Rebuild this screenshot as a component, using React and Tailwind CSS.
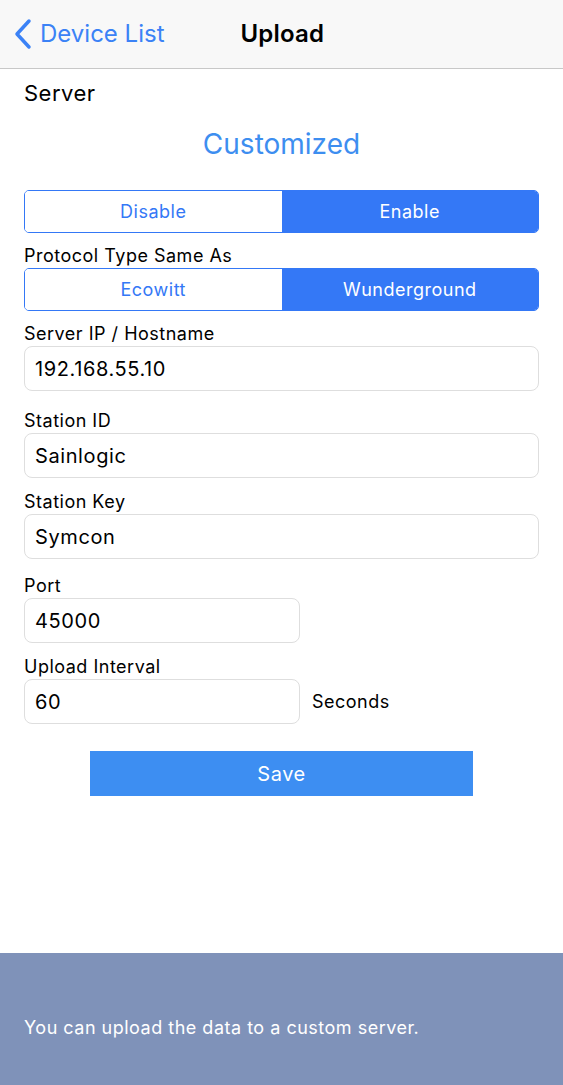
export default function App() {
  const fields = [
    { label: 'Server IP / Hostname', value: '192.168.55.10' },
    { label: 'Station ID', value: 'Sainlogic' },
    { label: 'Station Key', value: 'Symcon' },
  ];

  return (
    <div className="w-[563px] h-[1085px] flex flex-col bg-white text-black" style={{ fontFamily: 'Inter, "Noto Sans", sans-serif' }}>
      {/* Nav bar */}
      <div className="h-[69px] shrink-0 flex items-center bg-[#f8f8f8] border-b border-[#c8c8c8] relative">
        <div className="flex items-center pl-[12px] text-[#3b82f6]">
          <svg width="22" height="32" viewBox="0 0 22 32" fill="none" stroke="currentColor" strokeWidth="3.5" strokeLinecap="round" strokeLinejoin="round">
            <path d="M17 3L5 16l12 13" />
          </svg>
          <span className="ml-[6px] text-[24px]">Device List</span>
        </div>
        <span className="ml-[76px] text-[24px] font-semibold tracking-[0.2px]">Upload</span>
      </div>

      <div className="flex-1 flex flex-col px-[24px] tracking-[0.5px]">
        <div className="text-[22px] mt-[10px] leading-[28px]">Server</div>
        <div className="text-center text-[28px] text-[#3d8ef0] mt-[20px] leading-[34px] tracking-normal">Customized</div>

        <div className="mt-[29px] h-[43px] flex border border-[#3478f6] rounded-[5px] overflow-hidden text-[18px]">
          <div className="flex-1 flex items-center justify-center text-[#3478f6] bg-white">Disable</div>
          <div className="flex-1 flex items-center justify-center text-white bg-[#3478f6]">Enable</div>
        </div>

        <div className="text-[18px] mt-[12px] leading-[22px]">Protocol Type Same As</div>
        <div className="mt-[1px] h-[43px] flex border border-[#3478f6] rounded-[5px] overflow-hidden text-[18px]">
          <div className="flex-1 flex items-center justify-center text-[#3478f6] bg-white">Ecowitt</div>
          <div className="flex-1 flex items-center justify-center text-white bg-[#3478f6]">Wunderground</div>
        </div>

        <div className="text-[18px] mt-[12px] leading-[22px]">{fields[0].label}</div>
        <div className="mt-[1px] h-[45px] flex items-center px-[10px] border border-[#dedede] rounded-[8px] text-[20px] tracking-[0.6px]">{fields[0].value}</div>

        <div className="text-[18px] mt-[19px] leading-[22px]">{fields[1].label}</div>
        <div className="mt-[1px] h-[45px] flex items-center px-[10px] border border-[#dedede] rounded-[8px] text-[20px] tracking-[0.6px]">{fields[1].value}</div>

        <div className="text-[18px] mt-[13px] leading-[22px]">{fields[2].label}</div>
        <div className="mt-[1px] h-[45px] flex items-center px-[10px] border border-[#dedede] rounded-[8px] text-[20px] tracking-[0.6px]">{fields[2].value}</div>

        <div className="text-[18px] mt-[16px] leading-[22px]">Port</div>
        <div className="mt-[1px] w-[276px] h-[45px] flex items-center px-[10px] border border-[#dedede] rounded-[8px] text-[20px] tracking-[0.6px]">45000</div>

        <div className="text-[18px] mt-[13px] leading-[22px]">Upload Interval</div>
        <div className="mt-[1px] flex items-center">
          <div className="w-[276px] h-[45px] flex items-center px-[10px] border border-[#dedede] rounded-[8px] text-[20px] tracking-[0.6px]">60</div>
          <span className="ml-[12px] text-[18px]">Seconds</span>
        </div>

        <div className="mt-[27px] self-center w-[383px] h-[45px] flex items-center justify-center bg-[#3d8ef2] text-white text-[20px]">Save</div>
      </div>

      {/* Footer note */}
      <div className="h-[132px] shrink-0 bg-[#7f92b9] flex items-center px-[24px]">
        <span className="text-[18px] text-white mt-[16px] tracking-[0.5px]">You can upload the data to a custom server.</span>
      </div>
    </div>
  );
}
